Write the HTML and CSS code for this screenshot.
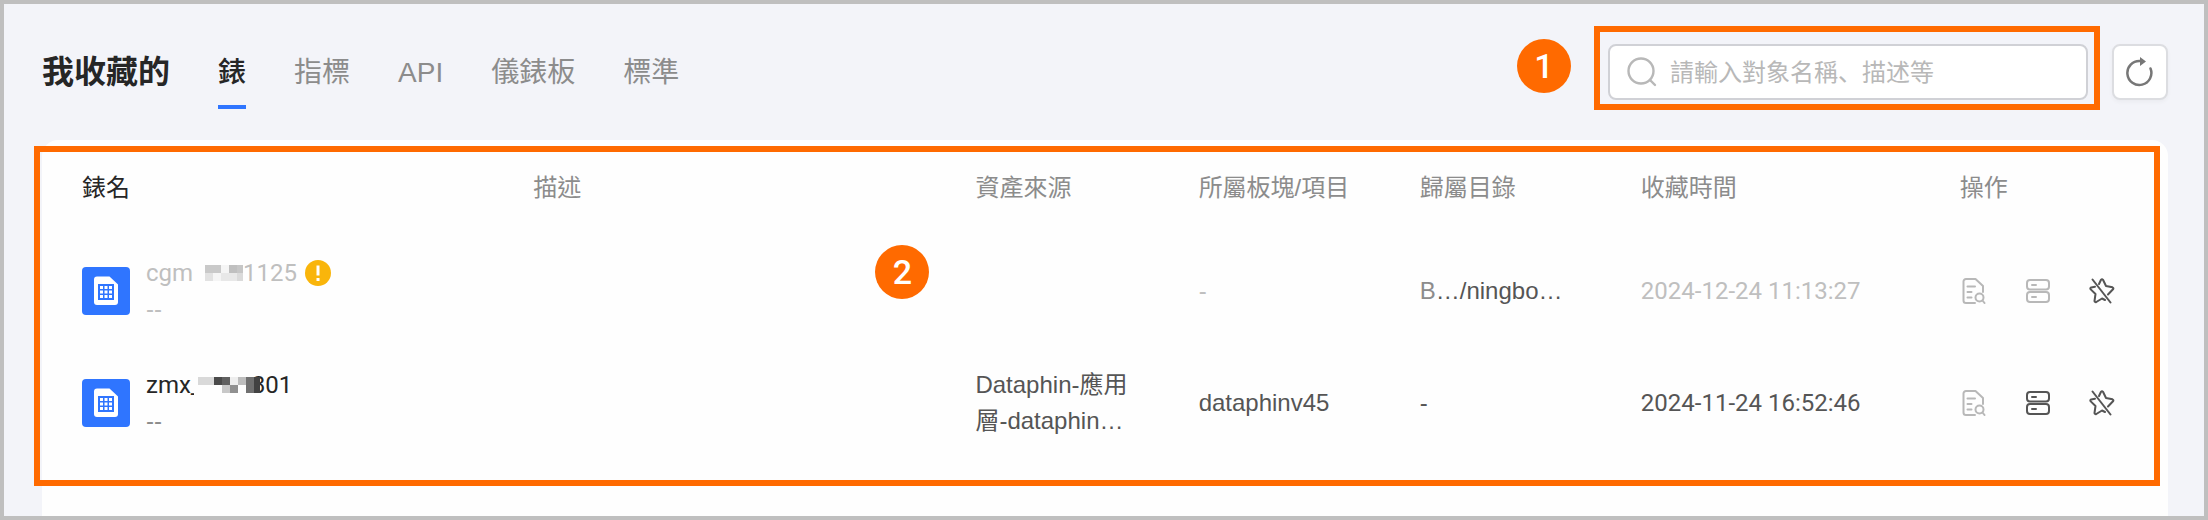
FILE: index.html
```html
<!DOCTYPE html>
<html lang="zh-Hant">
<head>
    <meta charset="UTF-8">
    <meta name="viewport" content="width=device-width, initial-scale=1.0">
    <title>我收藏的</title>
    <link rel="stylesheet" href="styles.css">
</head>
<body>
    <!-- Shared icons -->
    <svg class="sprite" aria-hidden="true">
        <symbol id="icon-table" viewBox="0 0 48 48">
            <path fill="#fff" d="M15 9.500h12.500L36 17.500V35a3 3 0 0 1-3 3H15a3 3 0 0 1-3-3V12.500a3 3 0 0 1 3-3z"/>
            <path fill="#2f75ff" d="M16 17h16v16H16z"/>
            <path fill="#fff" d="M18 19h3v3h-3zM22.500 19h3v3h-3zM27 19h3v3h-3zM18 23.500h3v3h-3zM22.500 23.500h3v3h-3zM27 23.500h3v3h-3zM18 28h3v3h-3zM22.500 28h3v3h-3zM27 28h3v3h-3z"/>
        </symbol>
        <symbol id="icon-detail" viewBox="0 0 26 26">
            <g fill="none" stroke="currentColor" stroke-width="2" stroke-linecap="round" stroke-linejoin="round">
                <path d="M14 25H5a2.500 2.500 0 0 1-2.500-2.500v-19A2.500 2.500 0 0 1 5 1h9.500l7.500 7v6"/>
                <path d="M6.500 8.500H14M6.500 14h4M6.500 19.500h4"/>
                <circle cx="18.500" cy="19.500" r="4"/>
                <path d="M21.500 22.500l2 2.500"/>
            </g>
        </symbol>
        <symbol id="icon-server" viewBox="0 0 26 26">
            <g fill="none" stroke="currentColor" stroke-width="2" stroke-linecap="round">
                <rect x="2" y="2" width="22" height="9.500" rx="3"/>
                <rect x="2" y="14" width="22" height="10" rx="3"/>
                <path d="M7 7h4M7 19h4"/>
            </g>
        </symbol>
        <symbol id="icon-unstar" viewBox="0 0 26 26">
            <g fill="none" stroke="currentColor" stroke-width="2" stroke-linecap="round" stroke-linejoin="round">
                <path d="M10 6l2-4.200q1-1.300 2 0L17 8l6.500 1.300q1.500.700.500 2L19 16.500"/>
                <path d="M6 8.700l-3.800.700q-1.500.800-.500 2L6.500 16l-1 7q.300 1.500 1.800 1L13 20.500l3 1.500"/>
                <path d="M3.500 1.500l18 23"/>
            </g>
        </symbol>
    </svg>

    <div class="page">
        <header class="header">
            <h1 class="title">我收藏的</h1>
            <nav class="tabs">
                <button class="tab active" type="button">錶</button>
                <button class="tab" type="button">指標</button>
                <button class="tab" type="button">API</button>
                <button class="tab" type="button">儀錶板</button>
                <button class="tab" type="button">標準</button>
            </nav>
            <div class="search">
                <svg class="search-icon" viewBox="0 0 30 30" aria-hidden="true">
                    <g fill="none" stroke="#b8b8b8" stroke-width="2.400" stroke-linecap="round">
                        <circle cx="14" cy="14" r="12.500"/>
                        <path d="M23.500 23.500l4.500 4.500"/>
                    </g>
                </svg>
                <input class="search-input" type="text" lang="zh-Hans" placeholder="請輸入對象名稱、描述等" aria-label="搜尋">
                <div class="outline search-outline"></div>
                <span class="marker search-marker">1</span>
            </div>
            <button class="refresh" type="button" aria-label="重新整理">
                <svg viewBox="0 0 28 30" aria-hidden="true">
                    <path fill="none" stroke="#777" stroke-width="2.500" stroke-linecap="round" d="M24.500 11.500A12 12 0 1 1 14 4"/>
                    <path fill="#777" d="M14 0l6 4.500-6 4.500z"/>
                </svg>
            </button>
        </header>

        <main class="panel">
            <div class="table-wrap">
                <table class="table">
                    <colgroup>
                        <col class="col-name">
                        <col class="col-desc">
                        <col class="col-source">
                        <col class="col-project">
                        <col class="col-catalog">
                        <col class="col-time">
                        <col class="col-actions">
                    </colgroup>
                    <thead>
                        <tr>
                            <th class="sorted">錶名</th>
                            <th>描述</th>
                            <th>資產來源</th>
                            <th>所屬板塊/項目</th>
                            <th>歸屬目錄</th>
                            <th>收藏時間</th>
                            <th>操作</th>
                        </tr>
                    </thead>
                    <tbody>
                        <tr class="disabled">
                            <td>
                                <div class="asset">
                                    <svg class="asset-icon" aria-hidden="true"><use href="#icon-table"/></svg>
                                    <div class="asset-text">
                                        <div class="asset-name">
                                            <span>cgm</span>
                                            <svg class="mask mask-first" viewBox="0 0 38 16" aria-hidden="true">
                                                <path fill="#c9c9c9" d="M0 0h16v8H0z"/>
                                                <path fill="#f5f5f5" d="M16 0h8v8h-8zM8 8h8v8H8z"/>
                                                <path fill="#bfbfbf" d="M24 0h8v8h-8z"/>
                                                <path fill="#c6c6c6" d="M32 0h6v8h-6z"/>
                                                <path fill="#e2e2e2" d="M0 8h8v8H0z"/>
                                                <path fill="#e8e8e8" d="M16 8h16v8H16z"/>
                                                <path fill="#dadada" d="M32 8h6v8h-6z"/>
                                            </svg>
                                            <span>1125</span>
                                            <svg class="warning" viewBox="0 0 26 26" aria-hidden="true">
                                                <circle cx="13" cy="13" r="13" fill="#f9b50b"/>
                                                <path fill="#fff" d="M11.500 5.500h3v10h-3zM11.500 18h3v3h-3z"/>
                                            </svg>
                                        </div>
                                        <div class="asset-note">--</div>
                                    </div>
                                </div>
                            </td>
                            <td></td>
                            <td></td>
                            <td>-</td>
                            <td class="catalog"><span class="catalog-root">B</span>…/ningbo…</td>
                            <td class="time">2024-12-24 11:13:27</td>
                            <td>
                                <div class="actions">
                                    <button class="action" type="button" disabled aria-label="詳情"><svg><use href="#icon-detail"/></svg></button>
                                    <button class="action" type="button" disabled aria-label="申請"><svg><use href="#icon-server"/></svg></button>
                                    <button class="action" type="button" aria-label="取消收藏"><svg><use href="#icon-unstar"/></svg></button>
                                </div>
                            </td>
                        </tr>
                        <tr>
                            <td>
                                <div class="asset">
                                    <svg class="asset-icon" aria-hidden="true"><use href="#icon-table"/></svg>
                                    <div class="asset-text">
                                        <div class="asset-name">
                                            <span>zmx_</span>
                                            <svg class="mask mask-second" viewBox="0 0 66 20" aria-hidden="true">
                                                <path fill="#fefefe" d="M0 0h58v20H0z"/>
                                                <path fill="#d9d9d9" d="M4 0h16v8H4z"/>
                                                <path fill="#4a4a4a" d="M20 0h8v8h-8z"/>
                                                <path fill="#606060" d="M28 0h8v8h-8z"/>
                                                <path fill="#eee" d="M36 0h8v8h-8z"/>
                                                <path fill="#bdbdbd" d="M44 0h8v8h-8z"/>
                                                <path fill="#707070" d="M52 0h8v16h-8z"/>
                                                <path fill="#424242" d="M60 0h6v16h-6z"/>
                                                <path fill="#c8c8c8" d="M28 8h8v8h-8z"/>
                                                <path fill="#909090" d="M36 8h8v8h-8z"/>
                                            </svg>
                                            <span>801</span>
                                        </div>
                                        <div class="asset-note">--</div>
                                    </div>
                                </div>
                            </td>
                            <td></td>
                            <td>Dataphin-應用層-dataphin…</td>
                            <td>dataphinv45</td>
                            <td>-</td>
                            <td class="time">2024-11-24 16:52:46</td>
                            <td>
                                <div class="actions">
                                    <button class="action" type="button" disabled aria-label="詳情"><svg><use href="#icon-detail"/></svg></button>
                                    <button class="action" type="button" aria-label="申請"><svg><use href="#icon-server"/></svg></button>
                                    <button class="action" type="button" aria-label="取消收藏"><svg><use href="#icon-unstar"/></svg></button>
                                </div>
                            </td>
                        </tr>
                    </tbody>
                </table>
                <div class="outline table-outline"></div>
                <span class="marker table-marker">2</span>
            </div>
        </main>
    </div>
</body>
</html>
```
FILE: styles.css
```css
* {
    box-sizing: border-box;
}
body {
    margin: 0;
    font-family: "Liberation Sans", "Noto Sans CJK SC", sans-serif;
    font-size: 24px;
    line-height: 36px;
    color: #555;
}
button,
input {
    font-family: inherit;
    font-size: inherit;
    margin: 0;
}
.sprite {
    position: absolute;
    width: 0;
    height: 0;
}
.page {
    display: flex;
    flex-direction: column;
    min-height: 100vh;
    padding: 0 36px 0 38px;
    border: 4px solid #bfbfbf;
    background-color: #f3f4f9;
}

/* header */
.header {
    display: flex;
    align-items: center;
    height: 136px;
}
.title {
    margin: 0 48px 0 0;
    font-size: 32px;
    line-height: 40px;
    font-weight: bold;
    color: #262626;
}
.tabs {
    display: flex;
    gap: 48px;
    margin-right: auto;
}
.tab {
    padding: 14px 0 12px;
    border: 0;
    border-top: 4px solid transparent;
    border-bottom: 4px solid transparent;
    background: none;
    font-size: 28px;
    line-height: 40px;
    color: #8c8c8c;
}
.tab.active {
    border-bottom-color: #2f75ff;
    font-weight: 500;
    color: #262626;
}
.search {
    position: relative;
    width: 480px;
    margin-right: 24px;
}
.search-icon {
    position: absolute;
    left: 19px;
    top: 13px;
    width: 30px;
    height: 30px;
}
.search-input {
    display: block;
    width: 100%;
    height: 56px;
    padding: 2px 16px 0 60px;
    border: 2px solid #d0d1d6;
    border-radius: 8px;
    background-color: #fff;
    color: #262626;
}
.search-input::placeholder {
    color: #b8b8b8;
}
.refresh {
    display: flex;
    align-items: center;
    justify-content: center;
    width: 56px;
    height: 56px;
    padding: 0;
    border: 2px solid #dcdde1;
    border-radius: 8px;
    background-color: #fff;
    box-shadow: 0 2px 4px rgba(0,0,0,0.04);
}
.refresh svg {
    width: 28px;
    height: 30px;
}

/* numbered highlights */
.outline {
    position: absolute;
    border: 6px solid #ff6a00;
    pointer-events: none;
}
.search-outline {
    inset: -18px -12px -10px -14px;
}
.table-outline {
    inset: 6px 8px 0 -8px;
}
.marker {
    position: absolute;
    width: 54px;
    height: 54px;
    border-radius: 50%;
    background-color: #ff6a00;
    color: #fff;
    font-family: Roboto, sans-serif;
    font-size: 34px;
    font-weight: 500;
    line-height: 54px;
    text-align: center;
}
.search-marker {
    top: -5px;
    right: calc(100% + 37px);
}
.table-marker {
    top: 105px;
    left: 39.2%;
}

/* table */
.panel {
    flex: 1;
    border-radius: 16px 16px 0 0;
    background-color: #fefefe;
}
.table-wrap {
    position: relative;
    padding-bottom: 27px;
}
.table {
    width: 100%;
    table-layout: fixed;
    border-collapse: collapse;
}
.col-name {
    width: 21.6%;
}
.col-desc {
    width: 20.8%;
}
.col-source {
    width: 10.5%;
}
.col-project,
.col-catalog {
    width: 10.4%;
}
.col-time {
    width: 15%;
}
.table th,
.table td {
    padding: 0 32px;
    text-align: left;
    vertical-align: middle;
}
.table th:first-child,
.table td:first-child {
    padding-left: 40px;
}
.table th {
    height: 95px;
    padding-right: 0;
    font-weight: normal;
    color: #8c8c8c;
}
.table th.sorted {
    color: #262626;
}
.table td {
    height: 112px;
}
.table td.catalog,
.table td.time {
    padding-right: 0;
    white-space: nowrap;
}
.time {
    font-family: Roboto, sans-serif;
}
.catalog-root {
    color: #8c8c8c;
}
.disabled {
    color: #bfbfbf;
}
.disabled .catalog {
    color: #555;
}
.asset {
    display: flex;
    align-items: center;
    gap: 16px;
}
.asset-icon {
    flex: none;
    width: 48px;
    height: 48px;
    border-radius: 4px;
    background-color: #2f75ff;
}
.asset-name {
    display: flex;
    align-items: center;
    font-family: Roboto, sans-serif;
    color: #262626;
}
.asset-note {
    color: #8c8c8c;
}
.disabled .asset-name,
.disabled .asset-note {
    color: #bfbfbf;
}
.mask {
    position: relative;
}
.mask-first {
    width: 38px;
    height: 16px;
    margin-left: 12px;
}
.mask-second {
    width: 66px;
    height: 20px;
    margin: 4px -8px 0 -8px;
}
.warning {
    width: 26px;
    height: 26px;
    margin-left: 8px;
}
.actions {
    display: flex;
    gap: 38px;
    margin-left: 1px;
}
.action {
    width: 26px;
    height: 26px;
    padding: 0;
    border: 0;
    background: none;
    color: #555;
}
.action:disabled {
    color: #b8b8b8;
}
.action svg {
    display: block;
    width: 26px;
    height: 26px;
}
```
